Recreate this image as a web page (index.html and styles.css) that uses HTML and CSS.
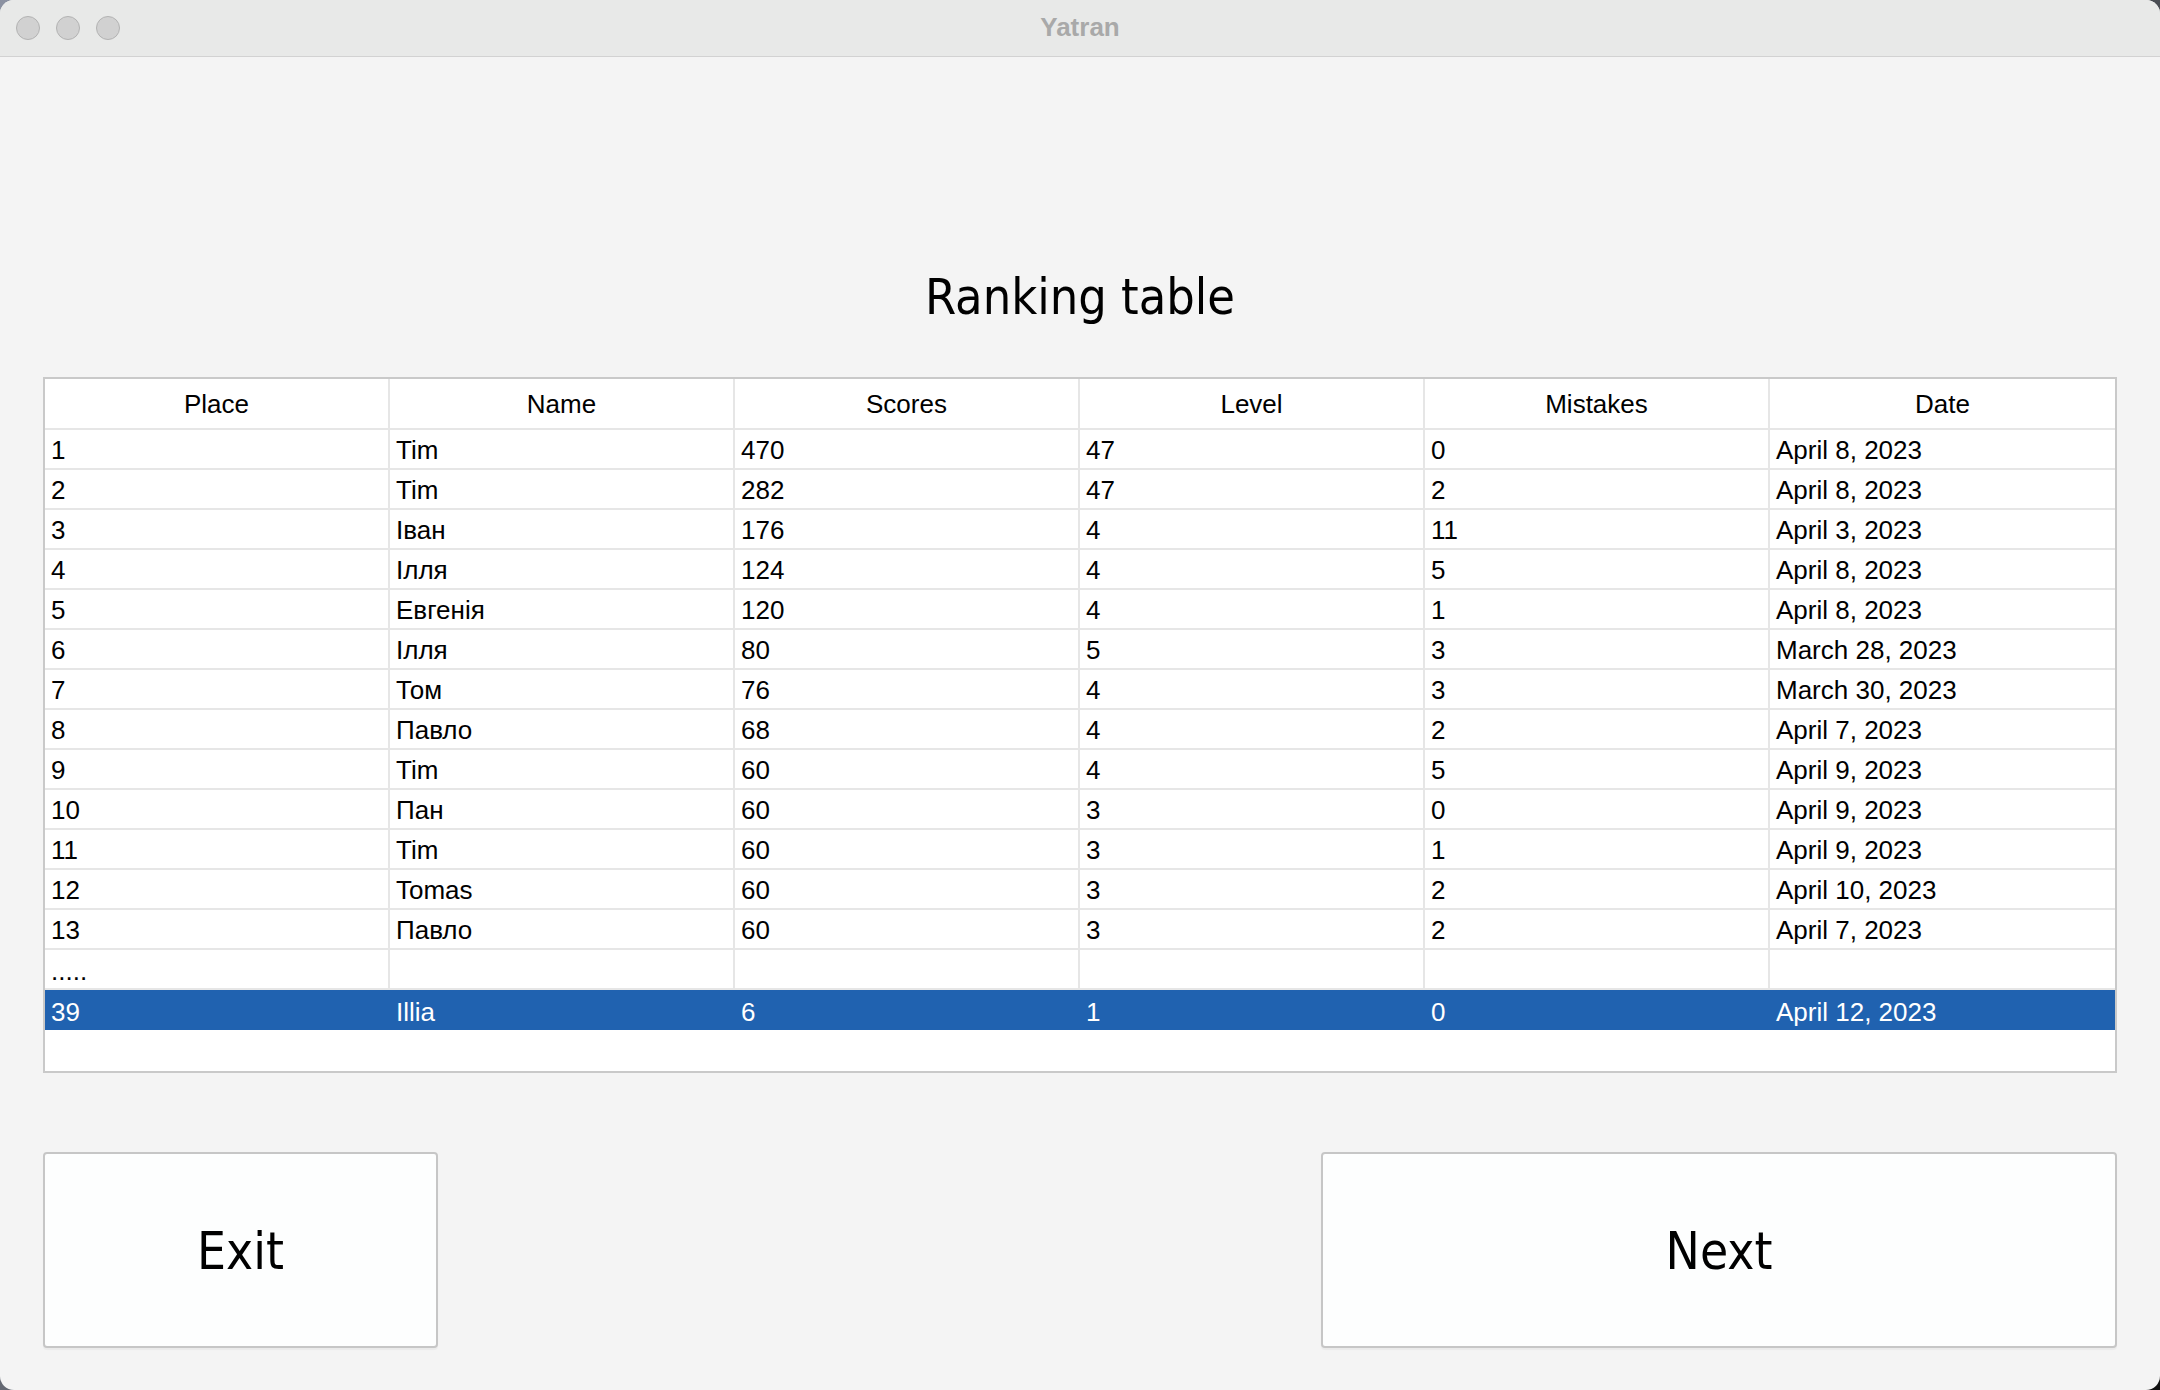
FILE: index.html
```html
<!DOCTYPE html>
<html lang="en">
<head>
<meta charset="utf-8">
<title>Yatran</title>
<link rel="stylesheet" href="styles.css">
</head>
<body>
<div class="window">
  <header class="titlebar">
    <div class="lights"><span class="light"></span><span class="light"></span><span class="light"></span></div>
    <div class="wintitle">Yatran</div>
    <div class="spacer"></div>
  </header>
  <main class="content">
    <h1 class="heading">Ranking table</h1>
    <div class="table">
      <div class="row head"><div class="cell">Place</div><div class="cell">Name</div><div class="cell">Scores</div><div class="cell">Level</div><div class="cell">Mistakes</div><div class="cell">Date</div></div>
      <div class="row"><div class="cell">1</div><div class="cell">Tim</div><div class="cell">470</div><div class="cell">47</div><div class="cell">0</div><div class="cell">April 8, 2023</div></div>
      <div class="row"><div class="cell">2</div><div class="cell">Tim</div><div class="cell">282</div><div class="cell">47</div><div class="cell">2</div><div class="cell">April 8, 2023</div></div>
      <div class="row"><div class="cell">3</div><div class="cell">Іван</div><div class="cell">176</div><div class="cell">4</div><div class="cell">11</div><div class="cell">April 3, 2023</div></div>
      <div class="row"><div class="cell">4</div><div class="cell">Ілля</div><div class="cell">124</div><div class="cell">4</div><div class="cell">5</div><div class="cell">April 8, 2023</div></div>
      <div class="row"><div class="cell">5</div><div class="cell">Евгенія</div><div class="cell">120</div><div class="cell">4</div><div class="cell">1</div><div class="cell">April 8, 2023</div></div>
      <div class="row"><div class="cell">6</div><div class="cell">Ілля</div><div class="cell">80</div><div class="cell">5</div><div class="cell">3</div><div class="cell">March 28, 2023</div></div>
      <div class="row"><div class="cell">7</div><div class="cell">Том</div><div class="cell">76</div><div class="cell">4</div><div class="cell">3</div><div class="cell">March 30, 2023</div></div>
      <div class="row"><div class="cell">8</div><div class="cell">Павло</div><div class="cell">68</div><div class="cell">4</div><div class="cell">2</div><div class="cell">April 7, 2023</div></div>
      <div class="row"><div class="cell">9</div><div class="cell">Tim</div><div class="cell">60</div><div class="cell">4</div><div class="cell">5</div><div class="cell">April 9, 2023</div></div>
      <div class="row"><div class="cell">10</div><div class="cell">Пан</div><div class="cell">60</div><div class="cell">3</div><div class="cell">0</div><div class="cell">April 9, 2023</div></div>
      <div class="row"><div class="cell">11</div><div class="cell">Tim</div><div class="cell">60</div><div class="cell">3</div><div class="cell">1</div><div class="cell">April 9, 2023</div></div>
      <div class="row"><div class="cell">12</div><div class="cell">Tomas</div><div class="cell">60</div><div class="cell">3</div><div class="cell">2</div><div class="cell">April 10, 2023</div></div>
      <div class="row"><div class="cell">13</div><div class="cell">Павло</div><div class="cell">60</div><div class="cell">3</div><div class="cell">2</div><div class="cell">April 7, 2023</div></div>
      <div class="row"><div class="cell dots">.....</div><div class="cell"></div><div class="cell"></div><div class="cell"></div><div class="cell"></div><div class="cell"></div></div>
      <div class="row selected"><div class="cell">39</div><div class="cell">Illia</div><div class="cell">6</div><div class="cell">1</div><div class="cell">0</div><div class="cell">April 12, 2023</div></div>
      <div class="filler"></div>
    </div>
    <div class="actions">
      <button class="btn btn-exit">Exit</button>
      <button class="btn btn-next">Next</button>
    </div>
  </main>
</div>
</body>
</html>
```

FILE: styles.css
```css
html, body {
  margin: 0;
  padding: 0;
}
body {
  width: 2160px;
  height: 1390px;
  background: linear-gradient(135deg, #8b91a1 0%, #5a5e66 50%, #111 100%);
  overflow: hidden;
}
.window {
  width: 2160px;
  height: 1390px;
  border-radius: 14px;
  overflow: hidden;
  background: #f4f4f4;
  display: flex;
  flex-direction: column;
}
.titlebar {
  height: 56px;
  flex: 0 0 56px;
  background: #e8e9e8;
  border-bottom: 1px solid #d2d2d2;
  display: grid;
  grid-template-columns: 1fr auto 1fr;
  align-items: center;
}
.lights {
  display: flex;
  gap: 16px;
  padding-left: 16px;
}
.light {
  width: 22px;
  height: 22px;
  border-radius: 50%;
  background: #d1d1d1;
  border: 1px solid #b3b3b3;
}
.wintitle {
  font-family: "Liberation Sans", Arial, sans-serif;
  font-weight: bold;
  font-size: 26px;
  color: #a9a9a9;
  padding-bottom: 2px;
}
.content {
  flex: 1;
  padding: 0 43px;
  display: flex;
  flex-direction: column;
}
.heading {
  margin: 210px 0 50px;
  font-family: "DejaVu Sans Condensed", "DejaVu Sans", sans-serif;
  font-stretch: condensed;
  font-weight: normal;
  font-size: 50px;
  line-height: 60px;
  text-align: center;
  color: #000;
}
.table {
  border: 2px solid #c9c9c9;
  background: #fff;
  font-family: "Liberation Sans", Arial, sans-serif;
  font-size: 26px;
  color: #000;
}
.row {
  display: grid;
  grid-template-columns: repeat(6, 1fr);
  height: 40px;
}
.cell {
  border-right: 2px solid #e6e6e6;
  border-bottom: 2px solid #e6e6e6;
  padding: 3px 6px 0;
  display: flex;
  align-items: center;
  white-space: nowrap;
}
.cell:last-child {
  border-right: none;
}
.row.head {
  height: 51px;
}
.row.head .cell {
  justify-content: center;
  padding-top: 2px;
}
.cell.dots {
  align-items: flex-end;
  padding-bottom: 4px;
  line-height: 26px;
}
.row.selected {
  background: #2062b0;
  color: #fff;
}
.row.selected .cell {
  border-color: transparent;
  border-bottom: none;
  padding-top: 4px;
}
.filler {
  height: 41px;
}
.actions {
  margin-top: 79px;
  display: flex;
  justify-content: space-between;
}
.btn {
  height: 196px;
  background: #fdfefe;
  border: 2px solid #c6c6c6;
  border-radius: 4px;
  box-shadow: 0 2px 1px rgba(0, 0, 0, 0.04);
  font-family: "DejaVu Sans Condensed", "DejaVu Sans", sans-serif;
  font-stretch: condensed;
  font-size: 51px;
  color: #000;
  padding: 0;
  padding-top: 2px;
}
.btn-exit {
  width: 395px;
}
.btn-next {
  width: 796px;
}
```
